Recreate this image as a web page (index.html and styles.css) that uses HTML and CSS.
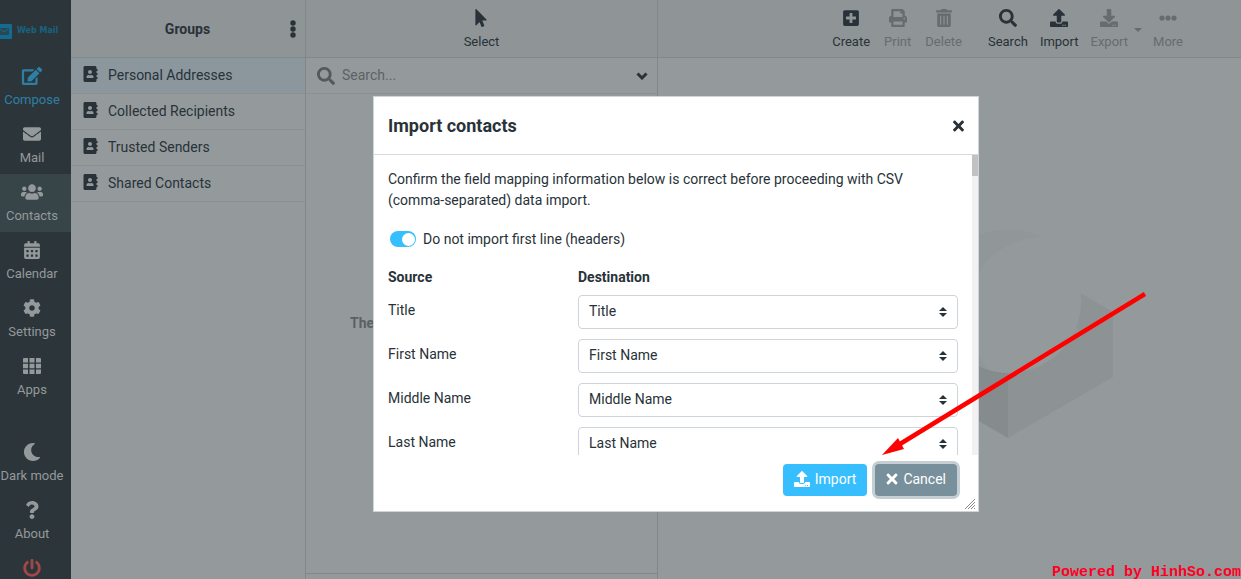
FILE: index.html
```html
<!DOCTYPE html>
<html lang="en">
<head>
<meta charset="utf-8">
<title>Contacts</title>
<link rel="stylesheet" href="styles.css">
</head>
<body>
<svg class="sprite" aria-hidden="true">
  <symbol id="edit" viewBox="0 0 576 512"><path d="M402.6 83.2l90.2 90.2c3.8 3.8 3.8 10 0 13.8L274.4 405.6l-92.8 10.3c-12.4 1.4-22.9-9.1-21.5-21.5l10.3-92.8L388.8 83.2c3.8-3.8 10-3.8 13.8 0zm162-22.9l-48.8-48.8c-15.2-15.2-39.9-15.2-55.2 0l-35.4 35.4c-3.8 3.8-3.8 10 0 13.8l90.2 90.2c3.8 3.8 10 3.8 13.8 0l35.4-35.4c15.2-15.3 15.2-40 0-55.2zM384 346.2V448H64V128h229.8c3.2 0 6.2-1.3 8.5-3.5l40-40c7.6-7.6 2.2-20.5-8.5-20.5H48C21.5 64 0 85.5 0 112v352c0 26.5 21.5 48 48 48h352c26.5 0 48-21.5 48-48V306.2c0-10.7-12.9-16-20.5-8.5l-40 40c-2.2 2.3-3.5 5.3-3.5 8.5z"/></symbol>
  <symbol id="envelope" viewBox="0 0 512 512"><path d="M502.3 190.8c3.9-3.1 9.7-.2 9.7 4.7V400c0 26.5-21.5 48-48 48H48c-26.5 0-48-21.5-48-48V195.6c0-5 5.7-7.8 9.7-4.7 22.4 17.4 52.1 39.5 154.1 113.6 21.1 15.4 56.7 47.8 92.2 47.6 35.7.3 72-32.8 92.3-47.6 102-74.1 131.6-96.3 154-113.7zM256 320c23.2.4 56.6-29.2 73.4-41.4 132.7-96.3 142.8-104.7 173.4-128.7 5.8-4.5 9.2-11.5 9.2-18.9v-19c0-26.5-21.5-48-48-48H48c-26.5 0-48 21.5-48 48v19c0 7.4 3.4 14.3 9.2 18.9 30.6 23.9 40.7 32.4 173.4 128.7 16.8 12.2 50.2 41.8 73.4 41.4z"/></symbol>
  <symbol id="users" viewBox="0 0 640 512"><path d="M96 224c35.3 0 64-28.7 64-64s-28.7-64-64-64-64 28.7-64 64 28.7 64 64 64zm448 0c35.3 0 64-28.7 64-64s-28.7-64-64-64-64 28.7-64 64 28.7 64 64 64zm32 32h-64c-17.6 0-33.5 7.1-45.1 18.6 40.3 22.1 68.9 62 75.1 109.4h66c17.7 0 32-14.3 32-32v-32c0-35.3-28.7-64-64-64zm-256 0c61.9 0 112-50.1 112-112S381.9 32 320 32 208 82.1 208 144s50.1 112 112 112zm76.8 32h-8.3c-20.8 10-43.9 16-68.5 16s-47.6-6-68.5-16h-8.3C179.6 288 128 339.6 128 403.2V432c0 26.5 21.5 48 48 48h288c26.5 0 48-21.5 48-48v-28.8c0-63.6-51.6-115.2-115.2-115.2zm-223.7-13.4C161.5 263.1 145.6 256 128 256H64c-35.3 0-64 28.7-64 64v32c0 17.7 14.3 32 32 32h65.9c6.3-47.4 34.9-87.3 75.2-109.4z"/></symbol>
  <symbol id="calendar" viewBox="0 0 448 512"><path fill-rule="evenodd" d="M0 464c0 26.500 21.500 48 48 48h352c26.500 0 48-21.500 48-48V192H0zM64 256h64v64H64zM192 256h64v64h-64zM320 256h64v64h-64zM64 384h64v64H64zM192 384h64v64h-64zM320 384h64v64h-64zM400 64h-48V16c0-8.800-7.200-16-16-16h-32c-8.800 0-16 7.200-16 16v48H160V16c0-8.800-7.200-16-16-16h-32c-8.800 0-16 7.200-16 16v48H48C21.500 64 0 85.500 0 112v48h448v-48c0-26.500-21.500-48-48-48z"/></symbol>
  <symbol id="cog" viewBox="0 0 512 512"><path d="M487.4 315.7l-42.6-24.6c4.3-23.2 4.3-47 0-70.2l42.6-24.6c4.9-2.8 7.1-8.6 5.5-14-11.1-35.6-30-67.8-54.7-94.6-3.8-4.1-10-5.1-14.8-2.3L380.8 110c-17.9-15.4-38.5-27.3-60.8-35.1V25.8c0-5.6-3.9-10.5-9.4-11.7-36.7-8.2-74.3-7.800-109.2 0-5.500 1.2-9.4 6.1-9.4 11.7V75c-22.2 7.9-42.8 19.8-60.8 35.1L88.7 85.500c-4.9-2.8-11-1.9-14.8 2.3-24.7 26.7-43.6 58.9-54.7 94.6-1.7 5.4.6 11.2 5.500 14L67.3 221c-4.3 23.2-4.3 47 0 70.2l-42.6 24.6c-4.9 2.8-7.1 8.6-5.500 14 11.1 35.6 30 67.8 54.7 94.6 3.8 4.1 10 5.1 14.8 2.3l42.6-24.6c17.9 15.4 38.5 27.3 60.8 35.1v49.2c0 5.6 3.9 10.5 9.4 11.7 36.7 8.2 74.3 7.8 109.2 0 5.500-1.2 9.4-6.1 9.4-11.7v-49.2c22.2-7.9 42.8-19.8 60.8-35.1l42.6 24.6c4.9 2.8 11 1.9 14.8-2.3 24.7-26.7 43.6-58.9 54.7-94.6 1.500-5.500-.7-11.3-5.6-14.1zM256 336c-44.1 0-80-35.9-80-80s35.9-80 80-80 80 35.9 80 80-35.9 80-80 80z"/></symbol>
  <symbol id="grid" viewBox="0 0 18 16"><path d="M1 0h4v4.500H0V1a1 1 0 0 1 1-1zM6.500 0h5v4.500h-5zM13 0h4a1 1 0 0 1 1 1v3.500h-5zM0 5.700h5v4.600H0zM6.500 5.700h5v4.600h-5zM13 5.700h5v4.600h-5zM0 11.500h5V16H1a1 1 0 0 1-1-1zM6.500 11.500h5V16h-5zM13 11.500h5V15a1 1 0 0 1-1 1h-4z"/></symbol>
  <symbol id="moon" viewBox="0 0 512 512"><path d="M283.211 512c78.962 0 151.079-35.925 198.857-94.792 7.068-8.708-.639-21.43-11.562-19.35-124.203 23.654-238.262-71.576-238.262-196.954 0-72.222 38.662-138.635 101.498-174.394 9.686-5.512 7.25-20.197-3.756-22.23A258.156 258.156 0 0 0 283.211 0c-141.309 0-256 114.511-256 256 0 141.309 114.511 256 256 256z"/></symbol>
  <symbol id="question" viewBox="0 0 384 512"><path d="M202.021 0C122.202 0 70.503 32.703 29.914 91.026c-7.363 10.58-5.093 25.086 5.178 32.874l43.138 32.709c10.373 7.865 25.132 6.026 33.253-4.148 25.049-31.381 43.63-49.449 82.757-49.449 30.764 0 68.816 19.799 68.816 49.631 0 22.552-18.617 34.134-48.993 51.164-35.423 19.86-82.299 44.576-82.299 106.405V320c0 13.255 10.745 24 24 24h72.471c13.255 0 24-10.745 24-24v-5.773c0-42.86 125.268-44.645 125.268-160.627C377.504 66.256 286.902 0 202.021 0zM192 373.459c-38.196 0-69.271 31.075-69.271 69.271 0 38.195 31.075 69.27 69.271 69.27s69.271-31.075 69.271-69.271-31.075-69.27-69.271-69.27z"/></symbol>
  <symbol id="power" viewBox="0 0 512 512"><path d="M400 54.1c63 45 104 118.6 104 201.9 0 136.8-110.8 247.7-247.5 248C120 504.3 8.2 393 8 256.4 7.9 173.1 48.9 99.3 111.8 54.2c11.7-8.3 28-4.8 35 7.7L162.6 90c5.9 10.5 3.1 23.8-6.6 31-41.5 30.8-68 79.6-68 134.9-.1 92.3 74.5 168.1 168 168.1 91.6 0 168.6-74.2 168-169.1-.3-51.8-24.7-101.8-68.1-134-9.7-7.2-12.4-20.5-6.5-30.9l15.8-28.1c7-12.4 23.2-16.1 34.8-7.8zM296 264V24c0-13.3-10.7-24-24-24h-32c-13.3 0-24 10.7-24 24v240c0 13.3 10.7 24 24 24h32c13.3 0 24-10.7 24-24z"/></symbol>
  <symbol id="book" viewBox="0 0 448 512"><path d="M436 160c6.6 0 12-5.4 12-12v-40c0-6.6-5.4-12-12-12h-20V48c0-26.5-21.5-48-48-48H48C21.5 0 0 21.5 0 48v416c0 26.5 21.5 48 48 48h320c26.5 0 48-21.5 48-48v-48h20c6.6 0 12-5.4 12-12v-40c0-6.6-5.4-12-12-12h-20v-64h20c6.6 0 12-5.4 12-12v-40c0-6.6-5.4-12-12-12h-20v-64h20zm-228-32c35.3 0 64 28.7 64 64s-28.7 64-64 64-64-28.7-64-64 28.7-64 64-64zm112 236.8c0 10.6-10 19.2-22.4 19.2H118.4C106 384 96 375.4 96 364.8v-19.2c0-31.8 30.1-57.6 67.2-57.6h5c12.3 5.1 25.7 8 39.8 8s27.6-2.9 39.8-8h5c37.1 0 67.2 25.8 67.2 57.6v19.2z"/></symbol>
  <symbol id="pointer" viewBox="0 0 320 512"><path d="M302.189 329.126H196.105l55.831 135.993c3.889 9.428-.555 19.999-9.444 23.999l-49.165 21.427c-9.165 4-19.443-.571-23.332-9.714l-53.053-129.136-86.664 89.138C18.729 472.71 0 463.554 0 447.977V18.299C0 1.899 19.921-6.096 30.277 5.443l284.412 292.542c11.472 11.179 3.007 31.141-12.5 31.141z"/></symbol>
  <symbol id="search" viewBox="0 0 512 512"><path d="M505 442.7L405.3 343c-4.5-4.5-10.6-7-17-7H372c27.6-35.3 44-79.7 44-128C416 93.1 322.9 0 208 0S0 93.1 0 208s93.1 208 208 208c48.3 0 92.7-16.4 128-44v16.3c0 6.4 2.5 12.5 7 17l99.7 99.7c9.4 9.4 24.6 9.4 33.9 0l28.3-28.3c9.4-9.4 9.4-24.6.1-34zM208 336c-70.7 0-128-57.2-128-128 0-70.7 57.2-128 128-128 70.7 0 128 57.2 128 128 0 70.7-57.2 128-128 128z"/></symbol>
  <symbol id="plus" viewBox="0 0 448 512"><path d="M400 32H48C21.5 32 0 53.5 0 80v352c0 26.5 21.5 48 48 48h352c26.5 0 48-21.5 48-48V80c0-26.5-21.5-48-48-48zm-32 252c0 6.6-5.4 12-12 12h-92v92c0 6.6-5.4 12-12 12h-56c-6.6 0-12-5.4-12-12v-92H92c-6.6 0-12-5.4-12-12v-56c0-6.6 5.4-12 12-12h92v-92c0-6.6 5.4-12 12-12h56c6.6 0 12 5.4 12 12v92h92c6.6 0 12 5.4 12 12v56z"/></symbol>
  <symbol id="print" viewBox="0 0 512 512"><path d="M448 192V77.25c0-8.49-3.37-16.62-9.37-22.63L393.37 9.37c-6-6-14.14-9.37-22.63-9.37H96C78.33 0 64 14.33 64 32v160c-35.35 0-64 28.65-64 64v112c0 8.84 7.16 16 16 16h48v96c0 17.67 14.33 32 32 32h320c17.67 0 32-14.33 32-32v-96h48c8.84 0 16-7.16 16-16V256c0-35.35-28.65-64-64-64zm-64 256H128v-96h256v96zm0-224H128V64h192v48c0 8.84 7.16 16 16 16h48v96zm48 72c-13.25 0-24-10.75-24-24 0-13.26 10.75-24 24-24s24 10.74 24 24c0 13.25-10.75 24-24 24z"/></symbol>
  <symbol id="trash" viewBox="0 0 448 512"><path d="M32 464a48 48 0 0 0 48 48h288a48 48 0 0 0 48-48V128H32zm272-256a16 16 0 0 1 32 0v224a16 16 0 0 1-32 0zm-96 0a16 16 0 0 1 32 0v224a16 16 0 0 1-32 0zm-96 0a16 16 0 0 1 32 0v224a16 16 0 0 1-32 0zM432 32H312l-9.4-18.7A24 24 0 0 0 281.1 0H166.8a23.72 23.72 0 0 0-21.4 13.3L136 32H16A16 16 0 0 0 0 48v32a16 16 0 0 0 16 16h416a16 16 0 0 0 16-16V48a16 16 0 0 0-16-16z"/></symbol>
  <symbol id="upload" viewBox="0 0 512 512"><path d="M296 384h-80c-13.3 0-24-10.7-24-24V192h-87.7c-17.8 0-26.7-21.5-14.1-34.1L242.3 5.7c7.5-7.5 19.8-7.5 27.3 0l152.2 152.2c12.6 12.6 3.7 34.1-14.1 34.1H320v168c0 13.3-10.7 24-24 24zm216-8v112c0 13.3-10.7 24-24 24H24c-13.3 0-24-10.7-24-24V376c0-13.3 10.7-24 24-24h136v8c0 30.9 25.1 56 56 56h80c30.9 0 56-25.1 56-56v-8h136c13.3 0 24 10.7 24 24zm-124 88c0-11-9-20-20-20s-20 9-20 20 9 20 20 20 20-9 20-20zm64 0c0-11-9-20-20-20s-20 9-20 20 9 20 20 20 20-9 20-20z"/></symbol>
  <symbol id="download" viewBox="0 0 512 512"><path d="M216 0h80c13.3 0 24 10.7 24 24v168h87.7c17.8 0 26.7 21.5 14.1 34.1L269.7 378.3c-7.5 7.5-19.8 7.5-27.3 0L90.1 226.1c-12.6-12.6-3.7-34.1 14.1-34.1H192V24c0-13.3 10.7-24 24-24zm296 376v112c0 13.3-10.7 24-24 24H24c-13.3 0-24-10.7-24-24V376c0-13.3 10.7-24 24-24h146.7l49 49c20.1 20.1 52.5 20.1 72.6 0l49-49H488c13.3 0 24 10.7 24 24zm-124 88c0-11-9-20-20-20s-20 9-20 20 9 20 20 20 20-9 20-20zm64 0c0-11-9-20-20-20s-20 9-20 20 9 20 20 20 20-9 20-20z"/></symbol>
  <symbol id="dots" viewBox="0 0 18 18"><circle cx="3" cy="9" r="2.600"/><circle cx="9" cy="9" r="2.600"/><circle cx="15" cy="9" r="2.600"/></symbol>
  <symbol id="times" viewBox="0 0 352 512"><path d="M242.72 256l100.07-100.07c12.28-12.28 12.28-32.19 0-44.48l-22.24-22.24c-12.28-12.28-32.19-12.28-44.48 0L176 189.28 75.93 89.21c-12.28-12.28-32.19-12.28-44.48 0L9.21 111.45c-12.28 12.28-12.28 32.19 0 44.48L109.28 256 9.21 356.07c-12.28 12.28-12.28 32.19 0 44.48l22.24 22.24c12.28 12.28 32.2 12.28 44.48 0L176 322.72l100.07 100.07c12.28 12.28 32.2 12.28 44.48 0l22.24-22.24c12.28-12.28 12.28-32.19 0-44.48L242.72 256z"/></symbol>
  <symbol id="sort" viewBox="0 0 8 10"><path d="M4 0l4 4H0zM4 10l4-4H0z"/></symbol>
</svg>

<div class="app">
  <aside class="taskbar">
    <a class="logo" href="#">
      <svg class="logo-mark" viewBox="0 0 12 15" aria-hidden="true"><rect x="-3" width="15" height="15" rx="1" fill="#126c92"/><rect x="-2" y="4" width="11" height="7" rx="1" fill="#2b4652"/><path d="M0 5l4 3 4-3" fill="none" stroke="#126c92"/></svg>
      <span class="logo-text">Web Mail</span>
    </a>
    <nav class="tasks">
      <a class="task compose" href="#"><svg class="icon wide"><use href="#edit"/></svg>Compose</a>
      <a class="task" href="#"><svg class="icon"><use href="#envelope"/></svg>Mail</a>
      <a class="task selected" href="#"><svg class="icon wide"><use href="#users"/></svg>Contacts</a>
      <a class="task" href="#"><svg class="icon"><use href="#calendar"/></svg>Calendar</a>
      <a class="task" href="#"><svg class="icon"><use href="#cog"/></svg>Settings</a>
      <a class="task" href="#"><svg class="icon"><use href="#grid"/></svg>Apps</a>
    </nav>
    <nav class="tasks special">
      <a class="task" href="#"><svg class="icon"><use href="#moon"/></svg>Dark mode</a>
      <a class="task" href="#"><svg class="icon"><use href="#question"/></svg>About</a>
      <a class="task logout" href="#" aria-label="Logout"><svg class="icon"><use href="#power"/></svg></a>
    </nav>
  </aside>

  <section class="panel groups">
    <header class="bar groups-bar">
      <h2 class="bar-title">Groups</h2>
      <button class="plain kebab" type="button" aria-label="Group actions"><svg width="6" height="18" viewBox="0 0 6 18"><circle cx="3" cy="3" r="2.700"/><circle cx="3" cy="9" r="2.700"/><circle cx="3" cy="15" r="2.700"/></svg></button>
    </header>
    <ul class="books">
      <li class="book active"><a href="#"><svg class="book-icon"><use href="#book"/></svg>Personal Addresses</a></li>
      <li class="book"><a href="#"><svg class="book-icon"><use href="#book"/></svg>Collected Recipients</a></li>
      <li class="book"><a href="#"><svg class="book-icon"><use href="#book"/></svg>Trusted Senders</a></li>
      <li class="book"><a href="#"><svg class="book-icon"><use href="#book"/></svg>Shared Contacts</a></li>
    </ul>
  </section>

  <section class="panel contacts">
    <header class="bar select-bar">
      <button class="tool" type="button"><svg class="icon"><use href="#pointer"/></svg>Select</button>
    </header>
    <div class="searchbar">
      <svg class="icon search-icon"><use href="#search"/></svg>
      <input class="search" type="text" placeholder="Search..." aria-label="Search contacts">
      <button class="plain" type="button" aria-label="Search options"><svg width="12" height="8" viewBox="0 0 12 8"><path class="chevron" d="M1.500 1.500L6 6l4.500-4.500"/></svg></button>
    </div>
    <div class="empty">The</div>
    <footer class="list-foot"></footer>
  </section>

  <main class="panel content">
    <header class="bar tools">
      <button class="tool" type="button"><svg class="icon"><use href="#plus"/></svg>Create</button>
      <button class="tool" type="button" disabled><svg class="icon"><use href="#print"/></svg>Print</button>
      <button class="tool" type="button" disabled><svg class="icon"><use href="#trash"/></svg>Delete</button>
      <span class="divider"></span>
      <button class="tool" type="button"><svg class="icon"><use href="#search"/></svg>Search</button>
      <button class="tool" type="button"><svg class="icon"><use href="#upload"/></svg>Import</button>
      <button class="tool" type="button" disabled><svg class="icon"><use href="#download"/></svg>Export</button>
      <button class="tool caret" type="button" disabled aria-label="Export options"><svg width="8" height="4" viewBox="0 0 8 4"><path d="M0 0h8L4 4z"/></svg></button>
      <button class="tool" type="button" disabled><svg class="icon"><use href="#dots"/></svg>More</button>
    </header>
    <div class="backdrop-logo">
      <svg width="210" height="210" viewBox="0 0 210 210" aria-hidden="true">
        <path fill="#8d9294" d="M105 23l105 61v65l-105 61z"/>
        <path fill="#868b8d" d="M105 23L0 84v65l105 61z"/>
        <path fill="#929799" d="M105 23L0 84l105 61 72-42z"/>
        <circle cx="106" cy="73" r="72" fill="#919799"/>
        <circle cx="140" cy="86" r="77" fill="#949a9c" clip-path="url(#ball)"/>
        <clipPath id="ball"><circle cx="106" cy="73" r="72"/></clipPath>
      </svg>
    </div>
  </main>
</div>

<div class="dialog" role="dialog" aria-labelledby="dialog-title">
  <header class="dialog-head">
    <h1 class="dialog-title" id="dialog-title">Import contacts</h1>
    <button class="plain" type="button" aria-label="Close"><svg class="close-icon"><use href="#times"/></svg></button>
  </header>
  <div class="dialog-view">
    <form class="dialog-body">
      <p class="note">Confirm the field mapping information below is correct before proceeding with CSV (comma-separated) data import.</p>
      <label class="switch-row"><input class="switch" type="checkbox" checked>Do not import first line (headers)</label>
      <div class="map-row heads"><span>Source</span><span>Destination</span></div>
      <div class="map-row"><label for="f1">Title</label><div class="picker"><select id="f1"><option>Title</option></select><svg class="sort"><use href="#sort"/></svg></div></div>
      <div class="map-row"><label for="f2">First Name</label><div class="picker"><select id="f2"><option>First Name</option></select><svg class="sort"><use href="#sort"/></svg></div></div>
      <div class="map-row"><label for="f3">Middle Name</label><div class="picker"><select id="f3"><option>Middle Name</option></select><svg class="sort"><use href="#sort"/></svg></div></div>
      <div class="map-row"><label for="f4">Last Name</label><div class="picker"><select id="f4"><option>Last Name</option></select><svg class="sort"><use href="#sort"/></svg></div></div>
    </form>
    <div class="track"><div class="thumb"></div></div>
  </div>
  <footer class="dialog-foot">
    <button class="btn primary" type="button"><svg class="btn-icon"><use href="#upload"/></svg>Import</button>
    <button class="btn cancel" type="button"><svg class="btn-icon slim"><use href="#times"/></svg>Cancel</button>
  </footer>
  <svg class="grip" viewBox="0 0 10 10" aria-hidden="true"><path d="M0 10L10 0M3 10l7-7M6 10l4-4M9 10l1-1"/></svg>
</div>

<svg class="arrow" width="264" height="164" viewBox="0 0 264 164" aria-hidden="true"><path d="M263 2L18 152" stroke="#f00" stroke-width="4.500"/><path d="M0 163l16-17 6 11z" fill="#f00"/></svg>
<div class="credit">Powered by HinhSo.com</div>
</body>
</html>
```
FILE: styles.css
```css
* { box-sizing: border-box; }
body {
  margin: 0;
  height: 100vh;
  overflow: hidden;
  position: relative;
  background: #949a9c;
  color: #283238;
  font: 14px/21px Roboto, "Liberation Sans", sans-serif;
}
a { color: inherit; text-decoration: none; }
button, input, select { font: inherit; color: inherit; }
svg { fill: currentColor; flex: none; }
.sprite { position: absolute; width: 0; height: 0; }
.icon { width: 18px; height: 18px; }
.icon.wide { width: 22px; }
.plain { display: flex; border: 0; background: none; padding: 0; }

.app { display: grid; grid-template-columns: 71px 235px 352px 1fr; height: 100%; }

/* Task menu */
.taskbar { background: #2c363a; color: #94999b; overflow: hidden; }
.logo { display: flex; align-items: center; gap: 5px; height: 58px; padding-top: 4px; color: #176380; }
.logo-mark { width: 12px; height: 15px; }
.logo-text { font: bold 8px/12px "DejaVu Sans", sans-serif; }
.task {
  display: flex;
  flex-direction: column;
  align-items: center;
  gap: 5px;
  height: 58px;
  padding: 9px 7px 0 0;
  font-size: 13px;
  line-height: 20px;
  white-space: nowrap;
}
.task.compose { color: #2f7fa5; }
.task.selected { background: #374549; }
.task.logout { color: #a24647; }
.special { margin-top: 28px; }

/* Panels */
.panel { display: flex; flex-direction: column; min-width: 0; border-right: 1px solid #82888a; }
.content { border-right: 0; }
.bar { display: flex; align-items: center; height: 58px; padding-top: 3px; background: #8f9496; border-bottom: 1px solid #82888a; }
.groups-bar { display: grid; grid-template-columns: 10px 1fr 10px; padding: 1px 9px 0 8px; }
.bar-title { grid-column: 2; margin: 0; font-size: 14px; line-height: 21px; text-align: center; }
.kebab { justify-self: end; }
.books { margin: 0; padding: 0; list-style: none; }
.book { border-bottom: 1px solid #8b9193; }
.book.active { background: #8b979d; }
.book a { display: flex; align-items: center; gap: 10px; height: 35px; padding-left: 12px; }
.book-icon { width: 15px; height: 16px; margin-bottom: 3px; }

.select-bar { justify-content: center; }
.tool {
  display: flex;
  flex-direction: column;
  align-items: center;
  gap: 5px;
  border: 0;
  background: none;
  padding: 0 7px;
  font-size: 13px;
  line-height: 20px;
}
.tool:disabled { color: #666c6f; }
.tools { justify-content: flex-end; padding-right: 52px; }
.divider { width: 13px; }
.divider ~ .tool { padding: 0 6px; }
.divider ~ .caret { padding: 0 5px 0 0; }

.searchbar { display: flex; align-items: center; height: 36px; padding: 0 9px 0 11px; border-bottom: 1px solid #8b9193; }
.search-icon { color: #53595c; }
.search { flex: 1; min-width: 0; border: 0; background: none; padding: 0 7px; outline: 0; }
.search::placeholder { color: #5c6265; opacity: 1; }
.chevron { fill: none; stroke: currentColor; stroke-width: 3; }
.empty { flex: 1; padding: 219px 0 0 44px; font-weight: bold; color: #5a6164; }
.list-foot { height: 6px; border-top: 1px solid #82888a; }

.backdrop-logo { flex: 1; display: flex; justify-content: center; align-items: center; padding: 28px 0 0 117px; }

/* Import dialog */
.dialog {
  position: absolute;
  left: 373px;
  top: 96px;
  width: 606px;
  background: #fff;
  border: 1px solid #ced4d8;
}
.dialog-head { display: flex; align-items: center; justify-content: space-between; height: 58px; padding: 0 14px; border-bottom: 1px solid #d6dade; }
.dialog-title { margin: 0; font-size: 18px; line-height: 24px; }
.close-icon { width: 11px; height: 16px; }
.dialog-view { display: grid; grid-template-columns: 1fr 6px; height: 300px; overflow: hidden; }
.dialog-body { padding: 14px 14px 0; }
.note { margin: 0 0 18px; }
.switch-row { display: flex; align-items: center; gap: 7px; margin-bottom: 17px; padding-left: 2px; }
.switch {
  appearance: none;
  display: flex;
  justify-content: flex-end;
  align-items: center;
  width: 26px;
  height: 16px;
  margin: 0 0 1px;
  padding: 0 1px;
  border-radius: 8px;
  background: #37beff;
}
.switch::before { content: ""; width: 13px; height: 13px; border-radius: 50%; background: #fff; }
.map-row { display: grid; grid-template-columns: 190px 1fr; margin-bottom: 10px; line-height: 30px; }
.map-row.heads { font-weight: bold; line-height: 20px; margin-bottom: 8px; }
.picker { display: grid; align-items: center; }
.picker > * { grid-area: 1 / 1; }
.picker select {
  appearance: none;
  width: 100%;
  height: 34px;
  padding: 0 10px 3px;
  border: 1px solid #ced4da;
  border-radius: 4px;
  background: #fff;
}
.sort { width: 8px; height: 10px; justify-self: end; margin-right: 11px; pointer-events: none; }
.track { background: #f1f1f1; }
.thumb { height: 21px; background: #c1c1c1; }
.dialog-foot { display: flex; justify-content: flex-end; gap: 8px; padding: 9px 21px 15px; }
.btn { display: flex; align-items: center; gap: 5px; height: 32px; border: 0; border-radius: 4px; padding: 0 11px 2px; color: #fff; }
.btn-icon { width: 16px; height: 16px; }
.btn-icon.slim { width: 12px; }
.primary { background: #37beff; }
.cancel { background: #78909b; box-shadow: 0 0 0 3px #c4ced3; }
.grip { position: absolute; right: 3px; bottom: 2px; width: 10px; height: 10px; fill: none; stroke: #888; }

.arrow { position: absolute; left: 882px; top: 292px; }
.credit { position: absolute; right: 0; bottom: 0; font: bold 15px/13px "Liberation Mono", monospace; color: #ff0022; }
```
